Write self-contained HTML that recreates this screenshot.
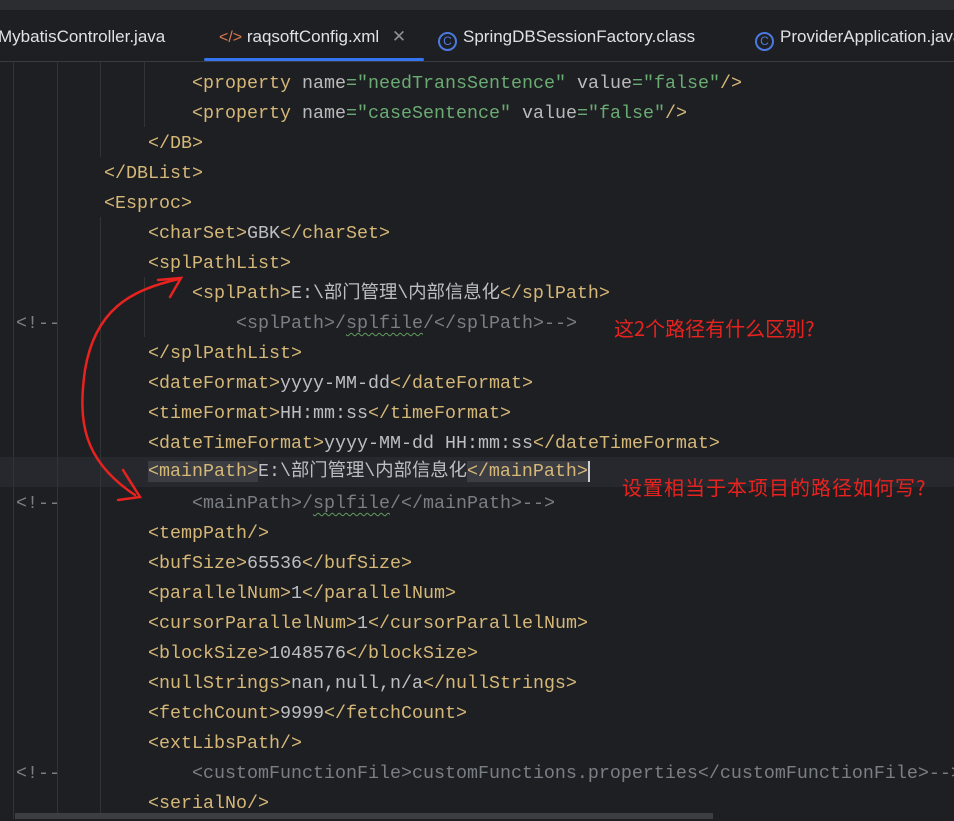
<!DOCTYPE html>
<html><head><meta charset="utf-8"><style>
body{margin:0;width:954px;height:819px;background:#1e1f22;overflow:hidden;position:relative;font-family:"Liberation Sans","Noto Sans CJK SC",sans-serif}
.top{position:absolute;left:0;top:0;width:954px;height:10px;background:#2b2d30}
.tabs{position:absolute;left:0;top:10px;width:954px;height:51px;background:#1e1f22;border-bottom:1px solid #393b40}
.tab{position:absolute;top:17px;font-size:17px;color:#dfe1e5;white-space:nowrap}
.ul{position:absolute;left:204px;top:58px;width:220px;height:3px;background:#3574f0;border-radius:2px}
.g{position:absolute;width:1px;background:#313337}
.l{position:absolute;left:16px;height:30px;line-height:30px;font-family:"Liberation Mono","Noto Sans CJK SC",monospace;font-size:18.33px;white-space:pre;color:#bcbec4}
.t{color:#d5b778}.a{color:#bababa}.v{color:#6aab73}.c{color:#7a7e85}
.cur{background:#26282e;position:absolute;left:0;width:954px;top:457px;height:30px}
.hb{background:#3b3d42}
.red{position:absolute;color:#e8231f;font-size:20px;font-family:"Noto Sans CJK SC",sans-serif;white-space:nowrap}
.sq{text-decoration:underline wavy #5f9d5f;text-underline-offset:4px;text-decoration-thickness:1px}
.ic{display:inline-block;width:19px;height:19px;border:2px solid #4a7ae0;border-radius:50%;box-sizing:border-box;vertical-align:-3px;font-size:12px;line-height:15px;text-align:center;color:#4a7ae0;margin-right:6px}
</style></head><body>
<div class="top"></div>
<div class="tabs">
<div class="tab" style="left:-2px">MybatisController.java</div>
<div class="tab" style="left:219px"><span style="color:#d8794f;font-size:16px">&lt;/&gt;</span> raqsoftConfig.xml <span style="color:#8c8f94;margin-left:8px">✕</span></div>
<div class="tab" style="left:438px"><span class="ic">C</span>SpringDBSessionFactory.class</div>
<div class="tab" style="left:755px"><span class="ic">C</span>ProviderApplication.java</div>
</div>
<div class="ul"></div>
<div class="cur"></div>
<div class="g" style="left:13px;top:62px;height:757px"></div>
<div class="g" style="left:57px;top:62px;height:757px"></div>
<div class="g" style="left:100px;top:62px;height:95px"></div>
<div class="g" style="left:100px;top:217px;height:602px"></div>
<div class="g" style="left:144px;top:62px;height:65px"></div>
<div class="g" style="left:144px;top:277px;height:60px"></div>

<div style="position:absolute;left:0;top:2px;width:954px;height:819px">
<div class="l" style="top:67px">                <span class="t">&lt;property</span> <span class="a">name</span><span class="v">="needTransSentence"</span> <span class="a">value</span><span class="v">="false"</span><span class="t">/&gt;</span></div>
<div class="l" style="top:97px">                <span class="t">&lt;property</span> <span class="a">name</span><span class="v">="caseSentence"</span> <span class="a">value</span><span class="v">="false"</span><span class="t">/&gt;</span></div>
<div class="l" style="top:127px">            <span class="t">&lt;/DB&gt;</span></div>
<div class="l" style="top:157px">        <span class="t">&lt;/DBList&gt;</span></div>
<div class="l" style="top:187px">        <span class="t">&lt;Esproc&gt;</span></div>
<div class="l" style="top:217px">            <span class="t">&lt;charSet&gt;</span>GBK<span class="t">&lt;/charSet&gt;</span></div>
<div class="l" style="top:247px">            <span class="t">&lt;splPathList&gt;</span></div>
<div class="l" style="top:277px">                <span class="t">&lt;splPath&gt;</span>E:\部门管理\内部信息化<span class="t">&lt;/splPath&gt;</span></div>
<div class="l c" style="top:307px">&lt;!--                <span>&lt;splPath&gt;/<span class="sq">splfile</span>/&lt;/splPath&gt;--&gt;</span></div>
<div class="l" style="top:337px">            <span class="t">&lt;/splPathList&gt;</span></div>
<div class="l" style="top:367px">            <span class="t">&lt;dateFormat&gt;</span>yyyy-MM-dd<span class="t">&lt;/dateFormat&gt;</span></div>
<div class="l" style="top:397px">            <span class="t">&lt;timeFormat&gt;</span>HH:mm:ss<span class="t">&lt;/timeFormat&gt;</span></div>
<div class="l" style="top:427px">            <span class="t">&lt;dateTimeFormat&gt;</span>yyyy-MM-dd HH:mm:ss<span class="t">&lt;/dateTimeFormat&gt;</span></div>
<div class="l" style="top:455px">            <span class="t hb">&lt;mainPath&gt;</span>E:\部门管理\内部信息化<span class="t hb">&lt;/mainPath&gt;</span><span style="border-left:2px solid #ced0d6"></span></div>
<div class="l c" style="top:487px">&lt;!--            &lt;mainPath&gt;/<span class="sq">splfile</span>/&lt;/mainPath&gt;--&gt;</div>
<div class="l" style="top:517px">            <span class="t">&lt;tempPath/&gt;</span></div>
<div class="l" style="top:547px">            <span class="t">&lt;bufSize&gt;</span>65536<span class="t">&lt;/bufSize&gt;</span></div>
<div class="l" style="top:577px">            <span class="t">&lt;parallelNum&gt;</span>1<span class="t">&lt;/parallelNum&gt;</span></div>
<div class="l" style="top:607px">            <span class="t">&lt;cursorParallelNum&gt;</span>1<span class="t">&lt;/cursorParallelNum&gt;</span></div>
<div class="l" style="top:637px">            <span class="t">&lt;blockSize&gt;</span>1048576<span class="t">&lt;/blockSize&gt;</span></div>
<div class="l" style="top:667px">            <span class="t">&lt;nullStrings&gt;</span>nan,null,n/a<span class="t">&lt;/nullStrings&gt;</span></div>
<div class="l" style="top:697px">            <span class="t">&lt;fetchCount&gt;</span>9999<span class="t">&lt;/fetchCount&gt;</span></div>
<div class="l" style="top:727px">            <span class="t">&lt;extLibsPath/&gt;</span></div>
<div class="l c" style="top:757px">&lt;!--            &lt;customFunctionFile&gt;customFunctions.properties&lt;/customFunctionFile&gt;--&gt;</div>
<div class="l" style="top:787px">            <span class="t">&lt;serialNo/&gt;</span></div>
</div>

<div style="position:absolute;left:15px;top:813px;width:698px;height:6px;background:#3c3e42"></div>

<div class="red" style="left:614px;top:313px">这2个路径有什么区别?</div>
<div class="red" style="left:622px;top:472px;letter-spacing:1px">设置相当于本项目的路径如何写?</div>

<svg style="position:absolute;left:0;top:0" width="954" height="819">
<g fill="none" stroke="#e8231f" stroke-width="2.5" stroke-linecap="round">
<path d="M179,279 C130,290 95,310 85,370 C78,420 82,460 135,495"/>
<path d="M158,280 L181,278 L170,297"/>
<path d="M123,470 L140,497 L118,500"/>
</g>
</svg>
</body></html>
